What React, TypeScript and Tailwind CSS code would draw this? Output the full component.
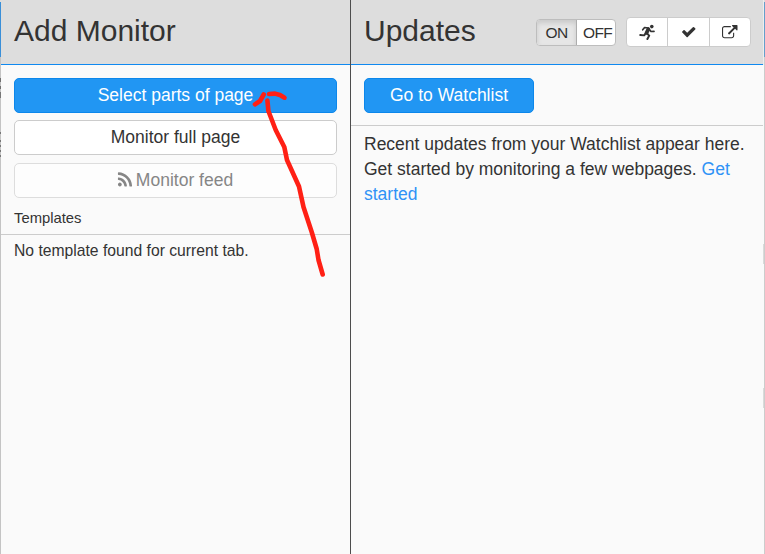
import type { ReactNode } from "react";

function Glyph({ d, className }: { d: string; className: string }) {
  return (
    <svg viewBox="0 0 1792 1792" fill="currentColor" className={className}>
      <path d={d} />
    </svg>
  );
}

function Runner() {
  return (
    <svg
      viewBox="0 0 16 16"
      className="size-[16px]"
      fill="none"
      stroke="currentColor"
      strokeLinecap="round"
      strokeLinejoin="round"
    >
      <circle cx="12.8" cy="2.6" r="1.8" fill="currentColor" stroke="none" />
      <path d="M9.300 5.200 L7.600 8.800" strokeWidth="3.800" />
      <path d="M9.500 4 L5.600 3.500 L3.700 5.800" strokeWidth="1.700" />
      <path d="M10.400 5.500 L12 7.500 L15 7.300" strokeWidth="1.700" />
      <path d="M6.600 9.400 L5.200 11.400 L1.200 11" strokeWidth="1.900" />
      <path d="M7.500 9 L10.200 11.600 L8.400 15" strokeWidth="2" />
    </svg>
  );
}

const RSS =
  "M576 1344q0 80-56 136t-136 56-136-56-56-136 56-136 136-56 136 56 56 136zm512 123q2 28-17 48-18 21-47 21h-135q-25 0-43-16.5t-20-41.5q-22-229-184.5-391.5t-391.5-184.5q-25-2-41.5-20t-16.5-43v-135q0-29 21-47 17-17 43-17h5q160 13 306 80.5t259 181.5q114 113 181.5 259t80.5 306zm512 2q2 27-18 47-18 20-46 20h-143q-26 0-44.5-17.5t-19.5-42.5q-12-215-101-408.5t-231.5-336-336-231.5-408.5-102q-25-1-42.5-19.5t-17.5-43.5v-143q0-28 20-46 18-18 44-18h3q262 13 501.5 120t425.5 294q187 186 294 425.5t120 501.5z";
const CHECK =
  "M1671 566q0 40-28 68l-724 724-136 136q-28 28-68 28t-68-28l-136-136-362-362q-28-28-28-68t28-68l136-136q28-28 68-28t68 28l294 295 656-657q28-28 68-28t68 28l136 136q28 28 28 68z";
const EXTERNAL =
  "M1408 928v320q0 119-84.5 203.5t-203.5 84.5h-832q-119 0-203.5-84.5t-84.5-203.5v-832q0-119 84.5-203.5t203.5-84.5h704q14 0 23 9t9 23v64q0 14-9 23t-23 9h-704q-66 0-113 47t-47 113v832q0 66 47 113t113 47h832q66 0 113-47t47-113v-320q0-14 9-23t23-9h64q14 0 23 9t9 23zm384-864v512q0 26-19 45t-45 19-45-19l-176-176-652 652q-10 10-23 10t-23-10l-114-114q-10-10-10-23t10-23l652-652-176-176q-19-19-19-45t19-45 45-19h512q26 0 45 19t19 45z";

function Button({ className, children }: { className: string; children: ReactNode }) {
  return (
    <button
      className={`flex h-[35px] items-center justify-center rounded-[5px] border text-[17.5px] leading-[25px] ${className}`}
    >
      {children}
    </button>
  );
}

/* Slivers of the web page that stay visible on both sides of the popup. */
function LeftEdge() {
  return (
    <div className="flex w-px shrink-0 flex-col bg-[#c4c4c4]">
      <div className="h-[2px] bg-[#dddddd]" />
      <div className="h-[55px] bg-[#3a8fd8]" />
      <div className="mt-[21px] h-[4px] bg-[#707070]" />
      <div className="mt-[4px] h-[3px] bg-[#707070]" />
      <div className="mt-[3px] h-[6px] bg-[#777777]" />
      <div className="mt-[34px] h-[2px] bg-[#777777]" />
      <div className="mt-[6px] h-[2px] bg-[#777777]" />
      <div className="mt-[3px] h-[2px] bg-[#777777]" />
      <div className="mt-[3px] h-[2px] bg-[#777777]" />
      <div className="mt-[3px] h-[2px] bg-[#777777]" />
    </div>
  );
}

function RightEdge() {
  return (
    <div className="flex w-[2px] shrink-0">
      <div className="flex w-px flex-col bg-[#fafafa]">
        <div className="h-[65px] bg-[#eeeeee]" />
        <div className="mt-[179px] h-[20px] bg-[#dadada]" />
        <div className="mt-[124px] h-[20px] bg-[#dadada]" />
      </div>
      <div className="flex w-px flex-col bg-[#cccccc]">
        <div className="h-[2px] bg-[#dddddd]" />
        <div className="h-[55px] bg-[#659fcb]" />
      </div>
    </div>
  );
}

export default function App() {
  return (
    <div className="relative flex h-[554px] w-[765px] overflow-hidden bg-[#fafafa] font-['Liberation_Sans',Arial,sans-serif] text-[#333333]">
      <LeftEdge />
      <section className="flex w-[350px] shrink-0 flex-col border-r border-[#4d4d4d]">
        <header className="flex h-[65px] items-center border-b border-[#1089f0] bg-[#dddddd] px-[13px] pb-[3px]">
          <h1 className="text-[30px] leading-[34px]">Add Monitor</h1>
        </header>
        <div className="flex flex-col px-[13px] pt-[13px]">
          <Button className="border-[#0c87eb] bg-[#2196f3] text-white">Select parts of page</Button>
          <Button className="mt-[7px] border-[#cccccc] bg-white">Monitor full page</Button>
          <Button className="mt-[8px] border-[#dddddd] bg-[#fdfdfd] pr-[2px] text-[#868686]">
            <Glyph d={RSS} className="mr-[2px] mb-[2px] size-[18px]" />
            <span>Monitor feed</span>
          </Button>
        </div>
        <h2 className="mt-[10px] h-[27px] border-b border-[#cccccc] px-[13px] text-[14.8px] leading-[21px]">
          Templates
        </h2>
        <p className="px-[13px] pt-[4px] text-[15.7px] leading-[23px]">No template found for current tab.</p>
      </section>

      <section className="flex w-[412px] shrink-0 flex-col">
        <header className="flex h-[65px] items-center border-b border-[#1089f0] bg-[#dddddd] pr-[12px] pl-[13px]">
          <h1 className="pb-[3px] text-[30px] leading-[34px]">Updates</h1>
          <div className="ml-auto flex h-[27px] w-[80px] overflow-hidden rounded-[4px] border border-[#bdbdbd] bg-white text-[15.5px] leading-[25px] tracking-[-0.6px]">
            <div className="w-[40px] shrink-0 border-r border-[#adadad] bg-[#e6e6e6] text-center shadow-[inset_0_3px_5px_rgba(0,0,0,0.125)]">
              ON
            </div>
            <div className="pl-[6px]">OFF</div>
          </div>
          <div className="ml-[10px] flex h-[30px] w-[125px] overflow-hidden rounded-[4px] border border-[#cccccc] bg-white">
            <div className="flex w-[41px] items-center justify-center border-r border-[#cccccc]">
              <Runner />
            </div>
            <div className="flex w-[42px] items-center justify-center border-r border-[#cccccc]">
              <Glyph d={CHECK} className="size-[15.500px]" />
            </div>
            <div className="flex flex-1 items-center justify-center">
              <Glyph d={EXTERNAL} className="mt-px size-[15.500px]" />
            </div>
          </div>
        </header>
        <div className="h-[61px] border-b border-[#cccccc] px-[13px] pt-[13px]">
          <Button className="w-[170px] border-[#0c87eb] bg-[#2196f3] text-white">Go to Watchlist</Button>
        </div>
        <p className="pt-[6px] pl-[13px] text-[17.5px] leading-[25px] whitespace-nowrap">
          Recent updates from your Watchlist appear here.
          <br />
          Get started by monitoring a few webpages. <a className="text-[#2f92f6]">Get<br />started</a>
        </p>
      </section>
      <RightEdge />

      {/* Hand-drawn arrow over the panel */}
      <svg
        className="pointer-events-none absolute top-0 left-0"
        width="765"
        height="554"
        fill="none"
        stroke="#ff2015"
        strokeWidth="4.6"
        strokeLinecap="round"
        strokeLinejoin="round"
      >
        <path d="M255 104.300 L260 101 L263.700 94.500" />
        <path d="M269 94 L275 93.600 L280 95 L284.500 97.700" />
        <path d="M267.400 100.500 L268.400 111 L275.700 130 L284.300 147 L287 160 L299 186.500 L303.500 207 L311.700 232 L316.700 249 L318.500 260 L322.700 274.500" />
      </svg>
    </div>
  );
}
